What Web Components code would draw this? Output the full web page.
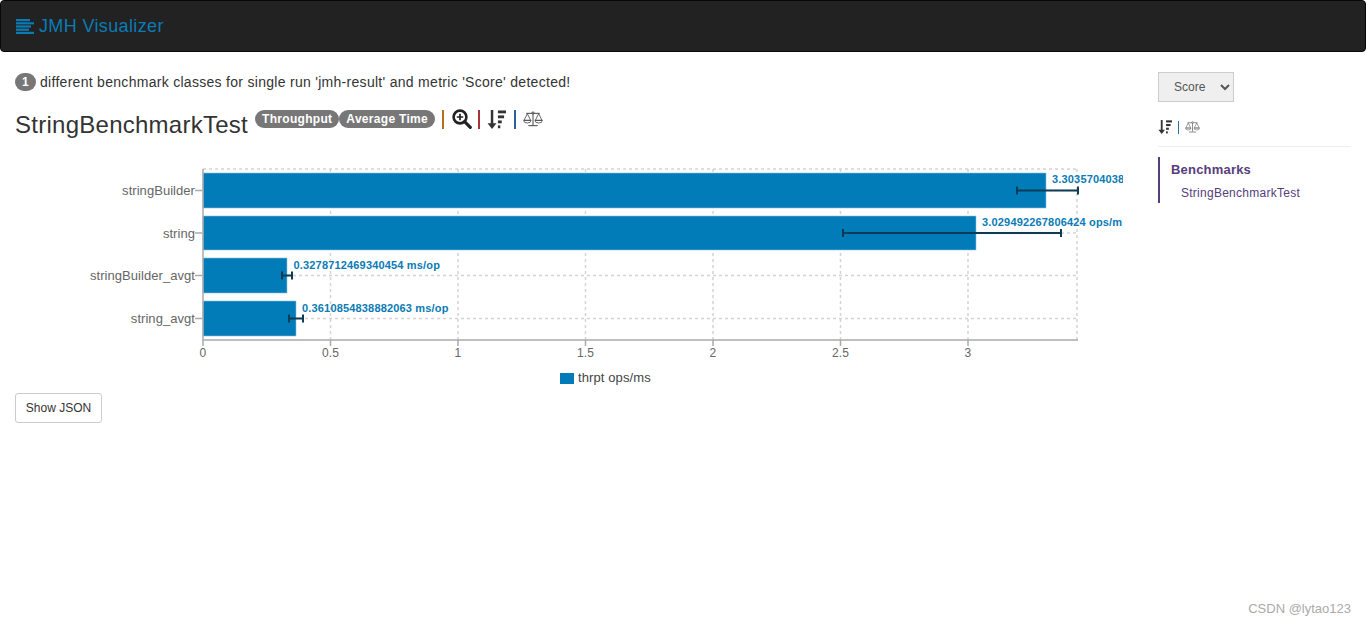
<!DOCTYPE html>
<html lang="en">
<head>
<meta charset="utf-8">
<title>JMH Visualizer</title>
<style>
  html, body { margin: 0; background: #fff; }
  body { font: 14px/20px "Liberation Sans", Arial, sans-serif; color: #333; }
</style>
</head>
<body>
<jmh-app></jmh-app>
<script>
const SORT_ICON = (size, color) => `
  <svg width="${size}" height="${size}" viewBox="0 0 20 20" fill="${color}" aria-hidden="true">
    <path d="M4 0h2.6v14H10l-4.7 6L.6 14H4z"/>
    <rect x="11.5" y="0.5" width="8.5" height="3"/>
    <rect x="11.5" y="5.7" width="6.5" height="3"/>
    <rect x="11.5" y="11" width="4" height="3"/>
    <rect x="11.5" y="16.2" width="2.5" height="3"/>
  </svg>`;

const SCALE_ICON = (w, h, color) => `
  <svg width="${w}" height="${h}" viewBox="0 0 30 24" fill="none" stroke="${color}" stroke-width="1.5" aria-hidden="true">
    <path d="M15 3v18M8 22h14M5 3.5h20"/>
    <circle cx="15" cy="3" r="1.6" fill="#fff"/>
    <path d="M6.5 4L1.5 14h10zM23.5 4l-5 10h10z" stroke-width="1.2"/>
    <path d="M1 14a5.5 4 0 0 0 11 0zM18 14a5.500 4 0 0 0 11 0z" stroke-width="1.2"/>
  </svg>`;

class JmhNavbar extends HTMLElement {
  connectedCallback() {
    this.attachShadow({ mode: 'open' }).innerHTML = `
      <style>
        :host { display: flex; align-items: center; gap: 5px; height: 50px; padding: 0 15px;
                background: #222; border: 1px solid #080808; border-radius: 4px; }
        span { font-size: 18px; letter-spacing: .36px; color: #0a7bb5; }
        svg { display: block; margin-top: 1px; }
      </style>
      <svg width="18" height="15" viewBox="0 0 18 15" fill="#0a7bb5" aria-hidden="true">
        <rect x="0" y="0" width="14" height="2.2"/>
        <rect x="0" y="3.2" width="18" height="2.2"/>
        <rect x="0" y="6.4" width="15" height="2.2"/>
        <rect x="0" y="9.6" width="13" height="2.2"/>
        <rect x="0" y="12.8" width="18" height="2.2"/>
      </svg>
      <span>JMH Visualizer</span>`;
  }
}

class JmhBadge extends HTMLElement {
  connectedCallback() {
    this.attachShadow({ mode: 'open' }).innerHTML = `
      <style>
        :host { display: inline-block; height: 18px; padding: 0 7px; border-radius: 10px; background: #777;
                color: #fff; font-size: 12px; font-weight: bold; letter-spacing: .3px; line-height: 18px; }
      </style>
      <slot></slot>`;
  }
}

class JmhToolbar extends HTMLElement {
  connectedCallback() {
    this.attachShadow({ mode: 'open' }).innerHTML = `
      <style>
        :host { display: flex; align-items: flex-start; height: 51px; }
        h2 { margin: 0; font-size: 24px; font-weight: normal; letter-spacing: .26px; line-height: 26px; color: #333; padding-top: 3px; }
        .badges { display: flex; margin: 0 0 0 7px; padding-top: 1px; }
        .tools { display: flex; align-items: center; height: 20px; color: #333; }
        .sep { width: 2px; height: 19px; }
        svg { display: block; }
      </style>
      <h2>StringBenchmarkTest</h2>
      <div class="badges">
        <jmh-badge>Throughput</jmh-badge><jmh-badge>Average Time</jmh-badge>
      </div>
      <div class="tools">
        <i class="sep" style="background:#b5701f;margin-left:7px"></i>
        <svg style="margin-left:8px" width="20" height="20" viewBox="0 0 20 20" fill="none" stroke="#222" aria-hidden="true">
          <circle cx="8" cy="8" r="6.4" stroke-width="2.6"/>
          <path d="M12.6 12.6L18.300 18.300" stroke-width="3.200" stroke-linecap="round"/>
          <path d="M4.800 8h6.400M8 4.800v6.400" stroke-width="1.700"/>
        </svg>
        <i class="sep" style="background:#a8323a;margin-left:6px"></i>
        <span style="margin-left:7px">${SORT_ICON(19, '#333')}</span>
        <i class="sep" style="background:#2f5f9e;margin-left:8px"></i>
        <span style="margin-left:7px">${SCALE_ICON(20, 16, '#444')}</span>
      </div>`;
  }
}

class JmhChart extends HTMLElement {
  connectedCallback() {
    const rows = [
      { name: 'stringBuilder', end: 1046, y: 173, h: 35, err: [1017, 1078], label: '3.303570403841 ops/ms', lx: 1052, ly: 183 },
      { name: 'string', end: 976, y: 216, h: 34, err: [843, 1061], label: '3.029492267806424 ops/ms', lx: 982, ly: 226 },
      { name: 'stringBuilder_avgt', end: 287, y: 258, h: 35, err: [282, 292], label: '0.3278712469340454 ms/op', lx: 293.500, ly: 269 },
      { name: 'string_avgt', end: 296, y: 301, h: 35, err: [289, 303], label: '0.3610854838882063 ms/op', lx: 302, ly: 312 },
    ];
    const ticks = [['0', 203], ['0.5', 330.5], ['1', 458], ['1.5', 585.5], ['2', 713], ['2.5', 840.5], ['3', 968]];
    const off = (x) => x - 15;
    const top = 9, bottom = 180;
    const grid = ticks.slice(1).map(([, x]) =>
      `<line class="grid" x1="${off(x)}" x2="${off(x)}" y1="${top}" y2="${bottom}"/>`).join('');
    const hgrid = rows.map((r) => {
      const cy = r.y + r.h / 2 - 160;
      return `<line class="grid" x1="188" x2="${off(1077)}" y1="${cy}" y2="${cy}"/>
        <line class="axis" x1="180" x2="187" y1="${cy}" y2="${cy}"/>
        <text class="cat" x="180" y="${cy + 4.500}" text-anchor="end">${r.name}</text>`;
    }).join('');
    const bars = rows.map((r) => {
      const cy = r.y + r.h / 2 - 160;
      return `<rect x="188" y="${r.y - 160}" width="${r.end - 203}" height="${r.h}" fill="#017cb8" stroke="#8cc0dc" stroke-width=".6"/>
        <path class="err" d="M${off(r.err[0])} ${cy}H${off(r.err[1])}M${off(r.err[0])} ${cy - 4}v8M${off(r.err[1])} ${cy - 4}v8"/>
        <text class="val" x="${off(r.lx)}" y="${r.ly - 160}">${r.label}</text>`;
    }).join('');
    const xt = ticks.map(([t, x]) =>
      `<line class="axis" x1="${off(x)}" x2="${off(x)}" y1="${bottom}" y2="${bottom + 6}"/>
       <text class="tick" x="${off(x)}" y="${bottom + 17}" text-anchor="middle">${t}</text>`).join('');
    this.attachShadow({ mode: 'open' }).innerHTML = `
      <style>
        :host { display: block; height: 233px; overflow: hidden; }
        svg { display: block; font-family: "Liberation Sans", Arial, sans-serif; }
        .grid { stroke: #d4d4d4; stroke-width: 1.500; stroke-dasharray: 3 3; }
        .axis { stroke: #aaa; stroke-width: 1.500; }
        .cat { font-size: 13px; letter-spacing: .05px; fill: #666; }
        .tick { font-size: 12px; letter-spacing: .1px; fill: #666; }
        .val { font-size: 11px; font-weight: bold; letter-spacing: .17px; fill: #0a7bb5; }
        .err { stroke: #0d3b56; stroke-width: 2; fill: none; }
        .leg { font-size: 13px; letter-spacing: .1px; fill: #444; }
      </style>
      <svg width="1108" height="233" viewBox="0 0 1108 233">
        <line class="grid" x1="188" x2="${off(1077)}" y1="${top}" y2="${top}"/>
        <line class="grid" x1="${off(1077)}" x2="${off(1077)}" y1="${top}" y2="${bottom}"/>
        ${grid}${hgrid}${bars}
        <line class="axis" x1="188" x2="188" y1="${top}" y2="${bottom}"/>
        <line class="axis" x1="188" x2="${off(1078)}" y1="${bottom}" y2="${bottom}"/>
        ${xt}
        <rect x="545" y="213" width="14" height="11" fill="#017cb8"/>
        <text class="leg" x="563" y="222">thrpt ops/ms</text>
      </svg>`;
  }
}

class JmhSidebar extends HTMLElement {
  connectedCallback() {
    this.attachShadow({ mode: 'open' }).innerHTML = `
      <style>
        :host { display: block; padding-top: 20px; }
        select { display: block; width: 76px; height: 30px; padding: 0 5px 0 11px; font: 12px "Liberation Sans", Arial, sans-serif;
                 color: #555; background-color: #efefef; border: 1px solid #ccc; border-radius: 0; }
        .tools { display: flex; align-items: center; gap: 6px; height: 18px; margin-top: 16px; padding-bottom: 10px;
                 border-bottom: 1px solid #eee; }
        .sep { width: 1px; height: 13px; background: #2f6fa8; }
        svg { display: block; }
        nav { margin-top: 10px; padding: 4px 0 1px 11px; border-left: 2px solid #563d7c; color: #563d7c; }
        b { display: block; font-size: 13px; letter-spacing: .2px; line-height: 17px; }
        a { display: block; margin: 6px 0 0 10px; font-size: 12px; letter-spacing: .26px; line-height: 18px; color: #563d7c; }
      </style>
      <select><option>Score</option></select>
      <div class="tools">
        <span>${SORT_ICON(14, '#333')}</span><i class="sep"></i><span>${SCALE_ICON(15, 12, '#666')}</span>
      </div>
      <nav><b>Benchmarks</b><a>StringBenchmarkTest</a></nav>`;
  }
}

class JmhApp extends HTMLElement {
  connectedCallback() {
    this.attachShadow({ mode: 'open' }).innerHTML = `
      <style>
        :host { display: block; position: relative; height: 625px; overflow: hidden; }
        main { display: grid; grid-template-columns: 1fr 193px; column-gap: 35px; padding: 0 15px; }
        .summary { display: flex; align-items: center; height: 20px; margin-top: 20px; margin-bottom: 17px; letter-spacing: .29px; }
        .count { display: inline-block; min-width: 7px; height: 18px; margin-right: 4px; padding: 0 7px; border-radius: 10px;
                 background: #777; color: #fff; font-size: 12px; font-weight: bold; line-height: 18px; letter-spacing: 0; }
        button { display: block; width: 87px; height: 30px; margin-top: 0; padding: 0; background: #fff; border: 1px solid #ccc;
                 border-radius: 3px; color: #333; font: 12px "Liberation Sans", Arial, sans-serif; }
        .mark { position: absolute; right: 15px; top: 599px; font-size: 13px; color: #aaa; }
      </style>
      <jmh-navbar></jmh-navbar>
      <main>
        <section>
          <div class="summary"><span class="count">1</span>different benchmark classes for single run 'jmh-result' and metric 'Score' detected!</div>
          <jmh-toolbar></jmh-toolbar>
          <jmh-chart></jmh-chart>
          <button>Show JSON</button>
        </section>
        <jmh-sidebar></jmh-sidebar>
      </main>
      <div class="mark">CSDN @lytao123</div>`;
  }
}

customElements.define('jmh-navbar', JmhNavbar);
customElements.define('jmh-badge', JmhBadge);
customElements.define('jmh-toolbar', JmhToolbar);
customElements.define('jmh-chart', JmhChart);
customElements.define('jmh-sidebar', JmhSidebar);
customElements.define('jmh-app', JmhApp);
</script>
</body>
</html>
